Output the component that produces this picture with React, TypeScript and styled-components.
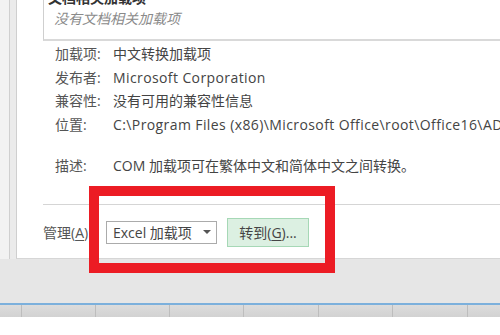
import React from 'react';
import styled, { createGlobalStyle } from 'styled-components';

const fontStack = `"Open Sans", "Noto Sans CJK SC", sans-serif`;

const GlobalStyle = createGlobalStyle`
  html, body {
    margin: 0;
    padding: 0;
    background: #ffffff;
  }
  body {
    font-family: ${fontStack};
    overflow: hidden;
  }
`;

// ============================================================================
// Page shell
// ============================================================================

const Screen = styled.div`
  position: relative;
  width: 500px;
  height: 335px;
  overflow: hidden;
  display: flex;
  flex-direction: column;
  background: #ffffff;
`;

const DialogArea = styled.div`
  display: flex;
  height: 259px;
  flex-shrink: 0;
`;

const SideStrip = styled.div`
  width: 9px;
  background: #f2f2f2;
  border-right: 1px solid #cfcfcf;
`;

const StripGap = styled.div`
  width: 6px;
  background: #ebebeb;
`;

const Panel = styled.div`
  flex: 1;
  min-width: 0;
  background: #ffffff;
  border-left: 1px solid #cfcfcf;
  border-bottom: 1px solid #d6d6d6;
  overflow: hidden;
  display: flex;
  flex-direction: column;
  color: #444444;
  font-size: 14px;
`;

// ============================================================================
// Add-in list
// ============================================================================

const ListBox = styled.div`
  margin: -12px 0 0 26px;
  padding: 0 0 9px 4px;
  border-left: 1px solid #cfcfcf;
  border-bottom: 2px solid #d9d9d9;
`;

const GroupHeader = styled.div`
  height: 20px;
  line-height: 20px;
  font-weight: 700;
  color: #333333;
`;

const EmptyItem = styled.div`
  height: 22px;
  line-height: 22px;
  padding-left: 6px;
  font-style: italic;
  color: #8a8a8a;
`;

// ============================================================================
// Details
// ============================================================================

const Details = styled.div`
  margin: 1px 0 0 38px;
  display: flex;
  flex-direction: column;
`;

const DetailRow = styled.div<{ $gap?: number }>`
  display: flex;
  height: 23.5px;
  line-height: 23.5px;
  white-space: nowrap;
  margin-top: ${({ $gap }) => $gap ?? 0}px;
`;

const Label = styled.span`
  width: 58px;
  flex-shrink: 0;
  color: #555555;
`;

// Latin text in the original is a touch wider than Open Sans
const Value = styled.span<{ $latin?: boolean }>`
  color: #444444;
  letter-spacing: ${({ $latin }) => ($latin ? '0.4px' : '0')};
`;

const Divider = styled.div`
  margin: 26px 0 0 26px;
  height: 1px;
  background: #d5d5d5;
`;

// ============================================================================
// Manage row
// ============================================================================

const ManageRow = styled.div`
  margin: 13px 0 0 26px;
  height: 29px;
  display: flex;
  align-items: center;
`;

const ManageLabel = styled.span`
  width: 63px;
  flex-shrink: 0;
  color: #555555;
  white-space: nowrap;
`;

const Key = styled.span`
  text-decoration: underline;
  text-underline-offset: 2px;
`;

const Select = styled.div`
  width: 111px;
  height: 23px;
  box-sizing: border-box;
  border: 1px solid #ababab;
  background: #ffffff;
  display: flex;
  align-items: center;
  justify-content: space-between;
  padding: 0 5px 0 6px;
  color: #444444;
  white-space: nowrap;
`;

const Caret = styled.span`
  width: 0;
  height: 0;
  border-left: 4px solid transparent;
  border-right: 4px solid transparent;
  border-top: 4px solid #555555;
`;

const GoButton = styled.div`
  margin-left: 10px;
  width: 82px;
  height: 29px;
  box-sizing: border-box;
  border: 1px solid #a6d8b6;
  background: #dcf0e2;
  display: flex;
  align-items: center;
  justify-content: center;
  color: #444444;
  white-space: nowrap;
`;

// ============================================================================
// Spreadsheet strip under the dialog
// ============================================================================

const StatusBand = styled.div`
  height: 44px;
  flex-shrink: 0;
  background: #e6e6e6;
  border-bottom: 2px solid #7cb0dc;
`;

const ColumnHeader = styled.div`
  height: 12px;
  flex-shrink: 0;
  display: flex;
  background: linear-gradient(#dcdcdc, #d2d2d2);
`;

const HeaderCell = styled.div<{ $w: number }>`
  width: ${({ $w }) => $w}px;
  flex-shrink: 0;
  box-sizing: border-box;
  border-right: 1px solid #bdbdbd;
`;

const Sheet = styled.div`
  flex: 1;
  background: #ffffff;
`;

// Red annotation drawn over the screenshot
const Highlight = styled.div`
  position: absolute;
  left: 89px;
  top: 186px;
  width: 246px;
  height: 87px;
  box-sizing: border-box;
  border: 10px solid #ec1c24;
  pointer-events: none;
`;

const details = [
  { label: '加载项:', value: '中文转换加载项', latin: false },
  { label: '发布者:', value: 'Microsoft Corporation', latin: true },
  { label: '兼容性:', value: '没有可用的兼容性信息', latin: false },
  {
    label: '位置:',
    value: 'C:\\Program Files (x86)\\Microsoft Office\\root\\Office16\\ADDINS\\TCSCCONV.DLL',
    latin: true,
  },
];

const columns = [22, 74, 74, 74, 75, 74, 75, 74];

export default function App() {
  return (
    <>
      <GlobalStyle />
      <Screen>
        <DialogArea>
          <SideStrip />
          <StripGap />
          <Panel>
            <ListBox>
              <GroupHeader>文档相关加载项</GroupHeader>
              <EmptyItem>没有文档相关加载项</EmptyItem>
            </ListBox>

            <Details>
              {details.map((d) => (
                <DetailRow key={d.label}>
                  <Label>{d.label}</Label>
                  <Value $latin={d.latin}>{d.value}</Value>
                </DetailRow>
              ))}
              <DetailRow $gap={18}>
                <Label>描述:</Label>
                <Value>COM 加载项可在繁体中文和简体中文之间转换。</Value>
              </DetailRow>
            </Details>

            <Divider />

            <ManageRow>
              <ManageLabel>
                管理(<Key>A</Key>):
              </ManageLabel>
              <Select>
                <span>Excel 加载项</span>
                <Caret />
              </Select>
              <GoButton>
                转到(<Key>G</Key>)...
              </GoButton>
            </ManageRow>
          </Panel>
        </DialogArea>

        <StatusBand />
        <ColumnHeader>
          {columns.map((w, i) => (
            <HeaderCell key={i} $w={w} />
          ))}
        </ColumnHeader>
        <Sheet />

        <Highlight />
      </Screen>
    </>
  );
}
